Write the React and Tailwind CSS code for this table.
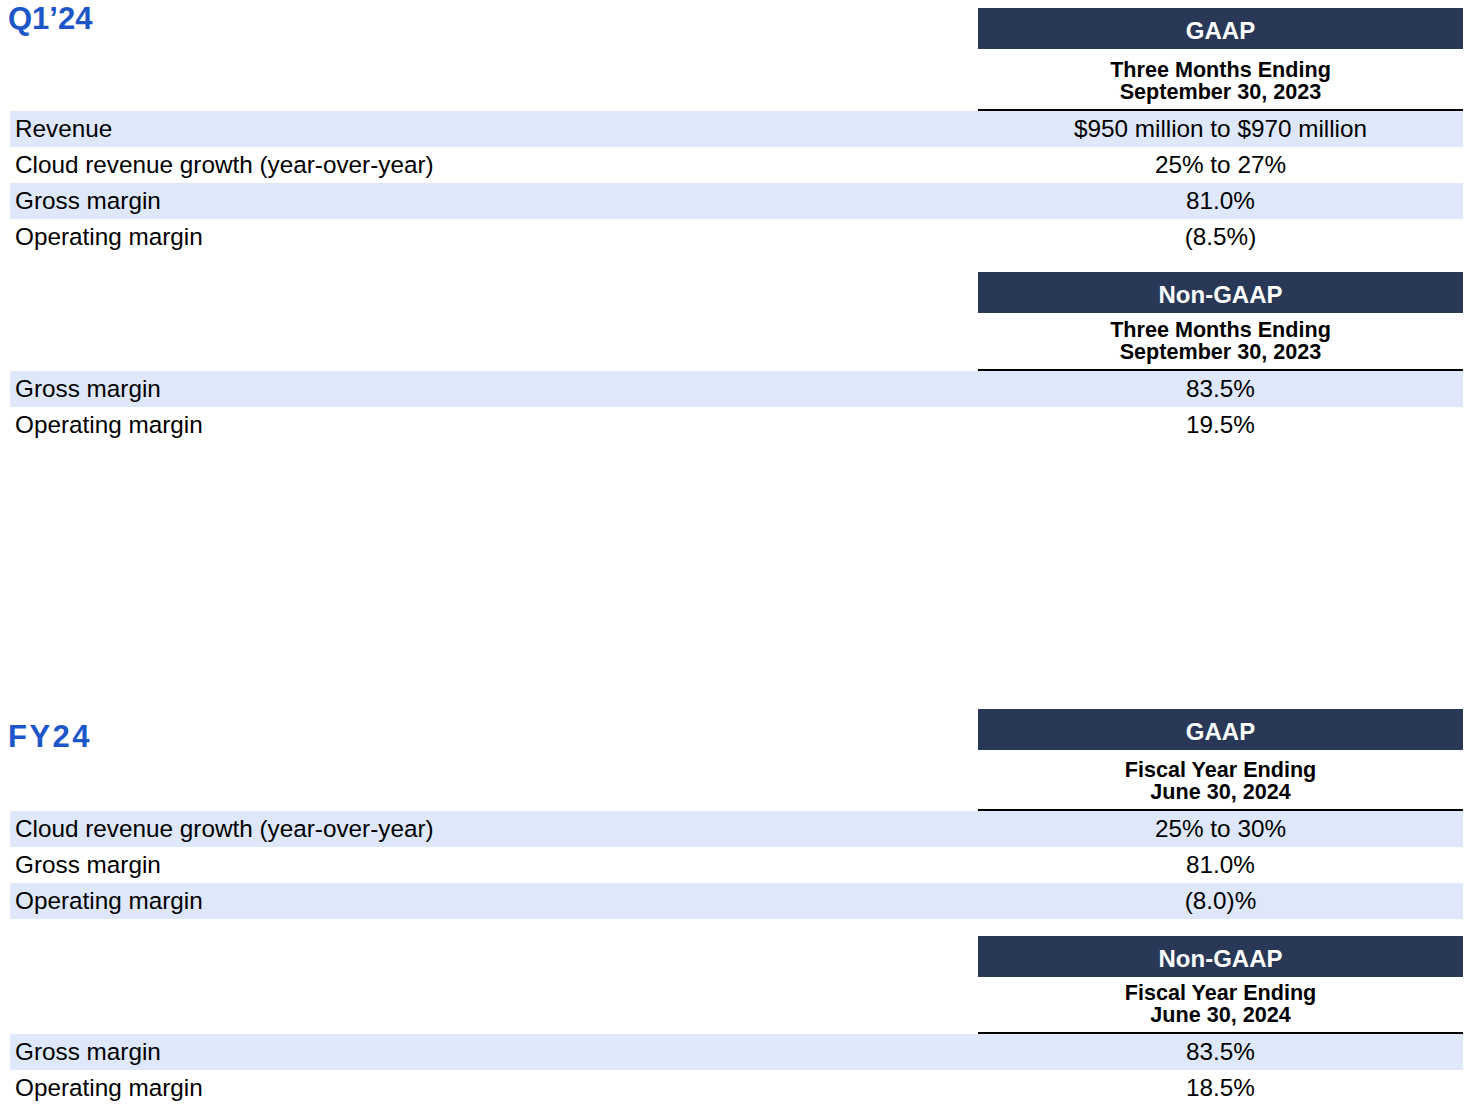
import React from 'react';

const font = { fontFamily: '"Liberation Sans", Arial, Helvetica, sans-serif' };

function Header({ title, line1, line2, subHeight }) {
    return (
        <div className="w-[485px] shrink-0">
            <div className="h-[41px] bg-[#2a3858] flex items-center justify-center pt-[4px] text-white font-bold text-[24px] leading-none">
                {title}
            </div>
            <div className={`${subHeight} flex flex-col justify-end items-center pb-[6px] font-bold text-[21.6px] leading-[22px] text-black`}>
                <div>{line1}</div>
                <div>{line2}</div>
            </div>
            <div className="h-[2px] bg-black"></div>
        </div>
    );
}

function Row({ label, value, shaded }) {
    return (
        <div className={`flex h-[36px] items-center text-[24.3px] leading-[28px] text-black ${shaded ? 'bg-[#dfe8fa]' : ''}`}>
            <div className="w-[968px] shrink-0 pl-[5px]">{label}</div>
            <div className="w-[485px] shrink-0 text-center">{value}</div>
        </div>
    );
}

function Block({ heading, headingClass, title, line1, line2, subHeight, rows }) {
    return (
        <div>
            <div className="flex">
                <div className="w-[968px] shrink-0">
                    {heading && (
                        <div className={`font-bold text-[31px] leading-none text-[#1d56c9] -ml-[2px] ${headingClass}`}>
                            {heading}
                        </div>
                    )}
                </div>
                <Header title={title} line1={line1} line2={line2} subHeight={subHeight} />
            </div>
            {rows.map((r, i) => (
                <Row key={i} label={r[0]} value={r[1]} shaded={i % 2 === 0} />
            ))}
        </div>
    );
}

export default function App() {
    return (
        <div className="w-[1470px] h-[1114px] bg-white pl-[10px] pr-[7px] pt-[8px]" style={font}>
            <Block
                heading="Q1’24"
                headingClass="-mt-[5px]"
                title="GAAP"
                line1="Three Months Ending"
                line2="September 30, 2023"
                subHeight="h-[60px]"
                rows={[
                    ['Revenue', '$950 million to $970 million'],
                    ['Cloud revenue growth (year-over-year)', '25% to 27%'],
                    ['Gross margin', '81.0%'],
                    ['Operating margin', '(8.5%)'],
                ]}
            />
            <div className="h-[17px]"></div>
            <Block
                title="Non-GAAP"
                line1="Three Months Ending"
                line2="September 30, 2023"
                subHeight="h-[56px]"
                rows={[
                    ['Gross margin', '83.5%'],
                    ['Operating margin', '19.5%'],
                ]}
            />
            <div className="h-[266px]"></div>
            <Block
                heading="FY24"
                headingClass="mt-[12px] tracking-[2.5px]"
                title="GAAP"
                line1="Fiscal Year Ending"
                line2="June 30, 2024"
                subHeight="h-[59px]"
                rows={[
                    ['Cloud revenue growth (year-over-year)', '25% to 30%'],
                    ['Gross margin', '81.0%'],
                    ['Operating margin', '(8.0)%'],
                ]}
            />
            <div className="h-[17px]"></div>
            <Block
                title="Non-GAAP"
                line1="Fiscal Year Ending"
                line2="June 30, 2024"
                subHeight="h-[55px]"
                rows={[
                    ['Gross margin', '83.5%'],
                    ['Operating margin', '18.5%'],
                ]}
            />
        </div>
    );
}
